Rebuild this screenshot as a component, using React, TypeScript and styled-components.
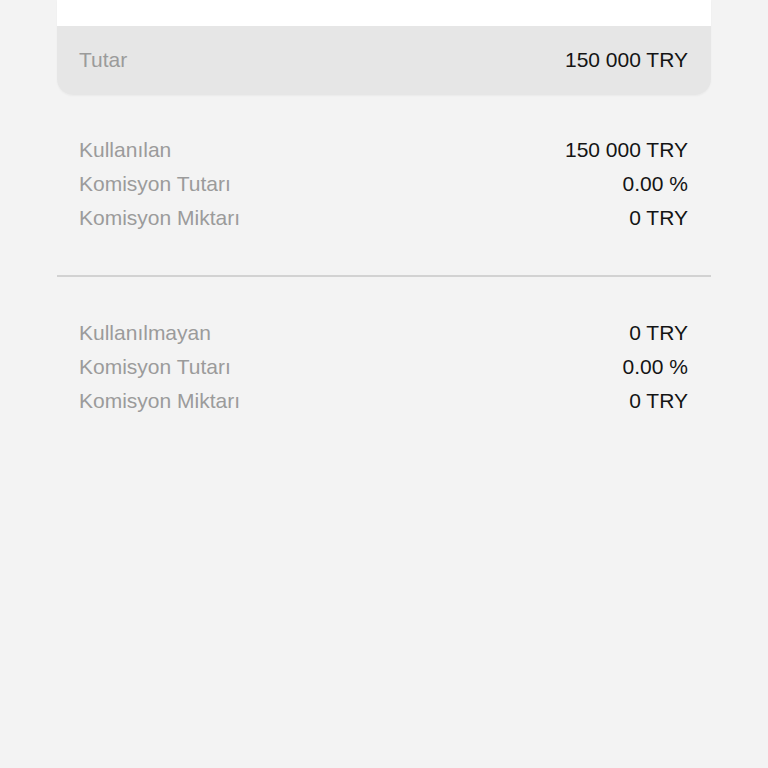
import React from "react";
import styled, { createGlobalStyle } from "styled-components";

const Global = createGlobalStyle`
  html, body {
    margin: 0;
    padding: 0;
    background: #f3f3f3;
    font-family: "Liberation Sans", Arial, sans-serif;
  }
`;

type Row = { label: string; value: string };

const used: Row[] = [
  { label: "Kullanılan", value: "150 000 TRY" },
  { label: "Komisyon Tutarı", value: "0.00 %" },
  { label: "Komisyon Miktarı", value: "0 TRY" },
];

const unused: Row[] = [
  { label: "Kullanılmayan", value: "0 TRY" },
  { label: "Komisyon Tutarı", value: "0.00 %" },
  { label: "Komisyon Miktarı", value: "0 TRY" },
];

const App: React.FC = () => {
  return (
    <Page>
      <Global />
      <Card>
        <CardTop />
        <CardFooter>
          <Label>Tutar</Label>
          <Value>150 000 TRY</Value>
        </CardFooter>
      </Card>

      <Section>
        {used.map((r, i) => (
          <Line key={i}>
            <Label>{r.label}</Label>
            <Value>{r.value}</Value>
          </Line>
        ))}
      </Section>

      <Divider />

      <Section second>
        {unused.map((r, i) => (
          <Line key={i}>
            <Label>{r.label}</Label>
            <Value>{r.value}</Value>
          </Line>
        ))}
      </Section>
    </Page>
  );
};

const Page = styled.div`
  min-height: 768px;
  padding: 0 57px;
  background: #f3f3f3;
  display: flex;
  flex-direction: column;
`;

const Card = styled.div`
  display: flex;
  flex-direction: column;
  border-radius: 0 0 16px 16px;
  overflow: hidden;
  box-shadow: 0 1px 2px rgba(0, 0, 0, 0.04);
`;

const CardTop = styled.div`
  height: 26px;
  background: #ffffff;
`;

const CardFooter = styled.div`
  height: 69px;
  background: #e6e6e6;
  display: flex;
  align-items: center;
  justify-content: space-between;
  padding: 0 23px 0 22px;
  box-sizing: border-box;
  padding-bottom: 1px;
`;

const Section = styled.div<{ second?: boolean }>`
  display: flex;
  flex-direction: column;
  padding: 0 23px 0 22px;
  margin-top: ${(p) => (p.second ? "39px" : "38px")};
`;

const Line = styled.div`
  display: flex;
  justify-content: space-between;
  align-items: center;
  height: 34px;
`;

const Label = styled.span`
  font-size: 21px;
  color: #9b9b9b;
`;

const Value = styled.span`
  font-size: 21px;
  color: #141414;
`;

const Divider = styled.div`
  height: 2px;
  background: #d2d2d2;
  margin-top: 40px;
`;

export default App;
